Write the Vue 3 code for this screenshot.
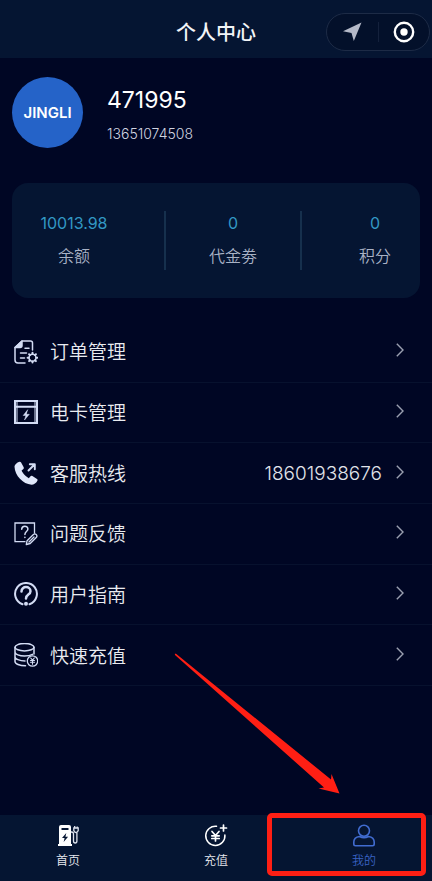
<script setup>
const stats = [
  { value: '10013.98', label: '余额' },
  { value: '0', label: '代金劵' },
  { value: '0', label: '积分' }
]

const rows = [
  { icon: 'order', label: '订单管理' },
  { icon: 'card', label: '电卡管理' },
  { icon: 'phone', label: '客服热线', value: '18601938676' },
  { icon: 'feedback', label: '问题反馈' },
  { icon: 'guide', label: '用户指南' },
  { icon: 'coins', label: '快速充值' }
]
</script>

<template>
  <div class="page">
    <header class="header">
      <h1 class="title">个人中心</h1>
      <div class="capsule">
        <button class="capsule-btn" type="button" aria-label="位置">
          <svg width="20" height="20" viewBox="0 0 20 20"><path d="M19.500 0.500L11.800 19 9.500 11 1 9.200z" fill="#b4b9c8" /></svg>
        </button>
        <button class="capsule-btn" type="button" aria-label="关闭">
          <svg width="22" height="22" viewBox="0 0 22 22">
            <circle cx="11" cy="11" r="9.200" fill="none" stroke="#fff" stroke-width="2.400" />
            <circle cx="11" cy="11" r="3.700" fill="#fff" />
          </svg>
        </button>
      </div>
    </header>

    <main class="content">
      <section class="profile">
        <div class="avatar">JINGLI</div>
        <div class="identity">
          <div class="name">471995</div>
          <div class="mobile">13651074508</div>
        </div>
      </section>

      <section class="stats">
        <div v-for="s in stats" :key="s.label" class="stat">
          <span class="stat-value">{{ s.value }}</span>
          <span class="stat-label">{{ s.label }}</span>
        </div>
      </section>

      <nav class="list">
        <a v-for="r in rows" :key="r.label" class="row" href="#">
          <svg class="row-icon" width="24" height="24" viewBox="0 0 24 24" fill="none" stroke="#d3dcf4" stroke-width="1.500" stroke-linecap="round" stroke-linejoin="round">
            <template v-if="r.icon === 'order'">
              <path d="M18.500 10V3q0-2-2-2H8L1 7.500V20q0 3 3 3h7" />
              <path d="M8 1v4.500q0 2-2 2H1z" fill="#d3dcf4" />
              <path d="M11 8.300h4M6.500 13h6M6.500 18h4" />
              <circle cx="18.500" cy="17.700" r="3.500" />
              <path d="M18.500 12.800v1.200M18.500 21.400v1.200M13.600 17.700h1.200M22.200 17.700h1.200M15.100 14.300l.8.8M21.100 20.300l.8.8M21.900 14.300l-.8.8M15.900 20.300l-.8.8" stroke-width="2" />
            </template>
            <template v-else-if="r.icon === 'card'">
              <rect x="1" y="1" width="22" height="22" stroke-width="2" stroke-linejoin="miter" />
              <path d="M1 6.800h22" stroke-width="2" />
              <path d="M3 2v20M21 2v20" stroke-width="1" />
              <path d="M13.500 10l-4.300 5.500h2.700L10.500 20l4.800-5.700h-2.800z" fill="#d3dcf4" stroke-width=".5" />
            </template>
            <template v-else-if="r.icon === 'phone'">
              <path d="M5.500.7C4 1 .5 3.300.5 5.800.9 14.500 9 23.300 17.500 23.700c2.300 0 5-1.800 6-4.200.2-.5 0-1.200-.5-1.500l-4.600-3c-.7-.4-1.400-.3-1.900.3l-1.700 1.900C12.300 16 8.800 12.600 7.600 9.600l1.800-1.700c.5-.5.6-1.100.3-1.700L7.100 1.400C6.700.8 6.200.5 5.500.7z" fill="#e0e7fa" stroke="none" />
              <path d="M14.500 9.500l6-6M15.800 3.300h5v5" stroke-width="1.900" />
            </template>
            <template v-else-if="r.icon === 'feedback'">
              <path d="M20.500 11V1H1v18.700h10" stroke-width="1.300" stroke-linejoin="miter" />
              <path d="M7.700 7.300c0-4.200 6.200-4.100 6.200-.4 0 2.700-3 2.500-3 5.500M10.900 15.300v.2" />
              <path d="M12.300 22.500l.8-3.800 6.300-6.200q1.500-1.200 2.800 0t.3 2.800l-6.300 6.200zM15 20l5-5" stroke-width="1.300" />
            </template>
            <template v-else-if="r.icon === 'guide'">
              <path d="M8.500 22.200a10.900 10.900 0 1 1 7 0" stroke-width="2" />
              <path d="M7.500 9.500c0-6 9-5.600 9-.3 0 3.600-4.500 3.200-4.500 7.200" stroke-width="2.500" />
              <circle cx="12" cy="21.800" r="2" fill="#d3dcf4" stroke="none" />
            </template>
            <template v-else>
              <ellipse cx="10.500" cy="4.200" rx="9.500" ry="3.700" />
              <path d="M1 4.200v14.300c0 2.400 4.500 4.300 10.500 4.300M20 4.200v6.800M1 9c0 2.300 4.500 4 9.500 4 3 0 6-.5 8-1.600M1 13.700c0 2.300 4.500 4.200 10 4.200" />
              <circle cx="18.500" cy="18" r="5.200" stroke-width="1.300" />
              <path d="M16.700 15l1.800 2.200 1.800-2.200M18.500 17.200v4M16.500 17.500h4M16.500 19.300h4" stroke-width="1.100" />
            </template>
          </svg>
          <span class="row-label">{{ r.label }}</span>
          <span v-if="r.value" class="row-value">{{ r.value }}</span>
          <svg class="chevron" width="8" height="14" viewBox="0 0 8 14"><path d="M.8.700L7 7 .8 13.300" fill="none" stroke="#9a9fb0" stroke-width="1.400" /></svg>
        </a>
      </nav>
    </main>

    <nav class="tabs">
      <a class="tab" href="#">
        <svg width="24" height="24" viewBox="0 0 24 24">
          <path fill="#fff" fill-rule="evenodd" d="M3 3q0-2 2-2h8q2 0 2 2v17h1v2H2v-2h1zM5.500 4v2h7V4zM10.300 9l-4.300 5h2.600l-1 4 4.500-5.300H9.400z" />
          <path d="M15 8h.5q2 0 2 2v7q0 2 1.700 2t1.700-2V9M17.800 6.500V4h4.400v2.500q-.5 2-2.200 2t-2.200-2zM18.700 4V2M21.200 4V2.500" fill="none" stroke="#dfe4ef" stroke-width="1.300" />
        </svg>
        <span>首页</span>
      </a>
      <a class="tab" href="#">
        <svg width="24" height="24" viewBox="0 0 24 24" fill="none" stroke="#fff" stroke-linecap="round">
          <path d="M12.500 2.300A9.600 9.600 0 1 0 20.900 11" stroke-width="1.500" />
          <path d="M19.500 1v6M16.500 4h6" stroke-width="1.700" />
          <path d="M8 7.500l3.500 4 3.500-4M11.500 11.500v5.500M7.800 11.800h7.400M7.800 14.500h7.400" stroke-width="1.700" />
        </svg>
        <span>充值</span>
      </a>
      <a class="tab active" href="#">
        <svg width="24" height="24" viewBox="0 0 24 24" fill="none" stroke="#416cd0" stroke-width="1.600">
          <circle cx="12" cy="6.700" r="5.500" />
          <path d="M7.500 12.500C4 13 1.800 15 1.800 18v2q0 1.700 1.700 1.700h17q1.700 0 1.700-1.700v-2c0-3-2.200-5-5.700-5.500q-4.500 2.200-9 0z" />
        </svg>
        <span>我的</span>
      </a>
      <svg class="arrow" width="166" height="141" viewBox="0 0 166 141">
        <path d="M.8.700L2 .800 157 126.500 157.500 121 165.500 140.500 144.500 135.500 150 134.500 1 2z" fill="#ff1f14" />
      </svg>
      <div class="highlight"></div>
    </nav>
  </div>
</template>

<style>
body {
  margin: 0;
  background: #000624;
}
</style>

<style scoped>
.page {
  display: flex;
  flex-direction: column;
  min-height: 100vh;
  background: #000624;
  color: #e9ebf0;
  font-family: Inter, "Noto Sans CJK SC", sans-serif;
}

a {
  color: inherit;
  text-decoration: none;
}

.header {
  display: grid;
  grid-template-columns: 1fr auto 1fr;
  align-items: center;
  height: 58px;
  padding: 6px 2px 0;
  box-sizing: border-box;
  background: #051532;
}

.title {
  grid-column: 2;
  margin: 0;
  padding-top: 2px;
  font-size: 20px;
  line-height: 28px;
  font-weight: 500;
  color: #f2f4f7;
}

.capsule {
  justify-self: end;
  display: flex;
  width: 104px;
  height: 38px;
  box-sizing: border-box;
  border: 1px solid #1d2b46;
  border-radius: 19px;
  background: #03102a;
}

.capsule-btn {
  flex: 1;
  display: flex;
  align-items: center;
  justify-content: center;
  margin: 8px 0;
  padding: 0;
  border: 0;
  background: none;
}

.capsule-btn + .capsule-btn {
  border-left: 1px solid #14213c;
}

.content {
  flex: 1;
}

.profile {
  display: flex;
  align-items: center;
  gap: 24px;
  padding: 19px 12px 35px;
}

.avatar {
  display: flex;
  align-items: center;
  justify-content: center;
  width: 71px;
  height: 71px;
  border-radius: 50%;
  background: #2563c8;
  color: #fff;
  font-size: 15px;
  font-weight: 600;
}

.identity {
  padding-top: 3px;
}

.name {
  font-size: 23px;
  line-height: 32px;
  font-weight: 400;
  color: #fff;
}

.mobile {
  margin-top: 8px;
  font-size: 14px;
  line-height: 20px;
  font-weight: 300;
  color: #d0d4e0;
}

.stats {
  display: grid;
  grid-template-columns: 152fr 136fr 120fr;
  margin: 0 12px;
  padding: 28px 0;
  border-radius: 16px;
  background: #051532;
}

.stat {
  display: flex;
  flex-direction: column;
  align-items: center;
  gap: 8px;
  height: 59px;
}

.stat:first-child {
  padding-right: 28px;
}

.stat:last-child {
  padding-left: 28px;
}

.stat + .stat {
  border-left: 2px solid #16304d;
}

.stat-value {
  font-size: 16px;
  line-height: 24px;
  color: #3298c4;
}

.stat-label {
  font-size: 16px;
  line-height: 26px;
  font-weight: 350;
  color: #a9b2c5;
}

.list {
  display: grid;
  grid-auto-rows: 1fr;
  min-height: 364px;
  margin-top: 24px;
}

.row {
  display: flex;
  align-items: center;
  padding: 0 28px 0 14px;
  border-bottom: 1px solid #07112e;
}

.row-label {
  flex: 1;
  margin-left: 12px;
  padding-top: 3px;
  font-size: 19px;
  line-height: 28px;
  font-weight: 350;
}

.row-value {
  padding-top: 2px;
  font-size: 19px;
  line-height: 28px;
  font-weight: 300;
  color: #e2e4ea;
}

.chevron {
  margin: 0 0 3px 14px;
}

.tabs {
  position: relative;
  display: flex;
  justify-content: space-between;
  height: 66px;
  padding: 9px 56px 0;
  box-sizing: border-box;
  background: #051532;
}

.tab {
  display: flex;
  flex-direction: column;
  align-items: center;
  gap: 5px;
  width: 24px;
  font-size: 12px;
  line-height: 16px;
  font-weight: 350;
  white-space: nowrap;
}

.tab.active {
  color: #3a63c4;
}

.arrow {
  position: absolute;
  right: 92px;
  bottom: 87px;
  pointer-events: none;
}

.highlight {
  position: absolute;
  right: 6px;
  bottom: 5px;
  width: 159px;
  height: 63px;
  box-sizing: border-box;
  border: 5px solid #ff1f14;
  border-radius: 5px;
  pointer-events: none;
}
</style>
